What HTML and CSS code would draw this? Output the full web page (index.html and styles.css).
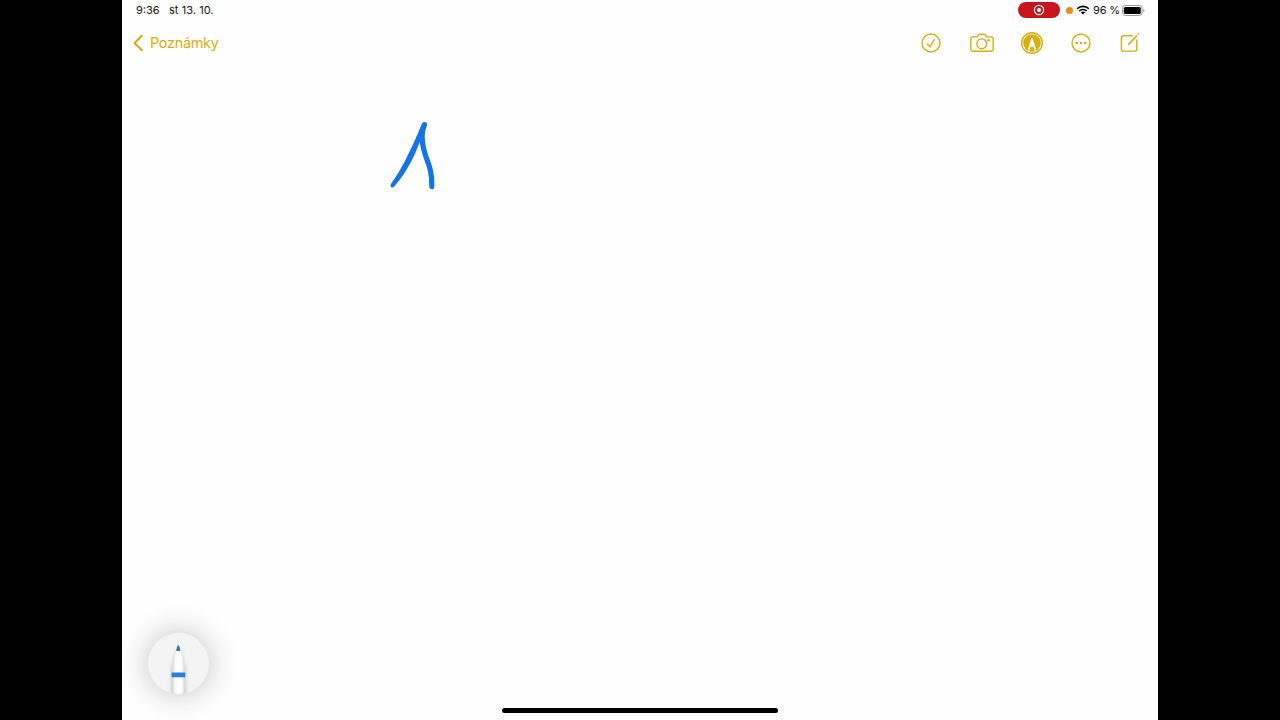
FILE: index.html
```
<!DOCTYPE html>
<html lang="cs">
<head>
    <meta charset="UTF-8">
    <title>Poznámky</title>
    <link rel="stylesheet" href="styles.css">
</head>
<body>
    <div class="screen">
        <header class="status">
            <span class="time">9:36</span>
            <span class="date">st 13. 10.</span>
            <span class="record">
                <svg width="12" height="12" viewBox="0 0 12 12">
                    <circle cx="6" cy="6" r="4.6" fill="none" stroke="#fff" stroke-width="1.3"/>
                    <circle cx="6" cy="6" r="2.1" fill="#fff"/>
                </svg>
            </span>
            <span class="dot"></span>
            <svg class="wifi" width="14" height="10" viewBox="0 0 14 10">
                <g fill="none" stroke="#000" stroke-width="1.6">
                    <path d="M1.2 3.8a8.2 8.2 0 0 1 11.6 0"/>
                    <path d="M3.2 6a5.4 5.4 0 0 1 7.6 0"/>
                </g>
                <path d="M7 9.6L4.9 7.5a3 3 0 0 1 4.2 0z"/>
            </svg>
            <span class="percent">96 %</span>
            <svg class="battery" width="23" height="11" viewBox="0 0 23 11">
                <rect x=".5" y=".5" width="19.6" height="10" rx="2.8" fill="none" stroke="#999"/>
                <rect x="1.8" y="1.9" width="17" height="7.2" rx="1.5"/>
                <path d="M21.2 3.7q1.3.5 1.3 1.8t-1.3 1.8z" fill="#999"/>
            </svg>
        </header>

        <nav class="toolbar">
            <a class="back">
                <svg width="12" height="18" viewBox="0 0 12 18">
                    <path d="M9.8 1.8L2.6 9l7.2 7.2" fill="none" stroke="currentColor" stroke-width="2.1" stroke-linecap="round" stroke-linejoin="round"/>
                </svg>
                <span class="label">Poznámky</span>
            </a>
            <div class="actions">
                <svg width="20" height="20" viewBox="0 0 20 20">
                    <circle cx="10" cy="10" r="9"/>
                    <path d="M6.2 10.7l2.7 3.2 4.7-7.8"/>
                </svg>
                <svg class="camera" width="24" height="20" viewBox="0 0 24 20">
                    <path d="M3 3.9h4.1l1.4-2Q9 1.2 9.8 1.2h4.2q.8 0 1.3.7l1.3 2H21q2.2 0 2.2 2.2v10q0 2.2-2.2 2.2H3q-2.2 0-2.2-2.2v-10Q.8 3.9 3 3.9z"/>
                    <circle cx="11.7" cy="10.8" r="4.9"/>
                    <circle class="fill" cx="18.5" cy="7.3" r="1.2"/>
                </svg>
                <svg class="markup" width="22" height="22" viewBox="0 0 22 22">
                    <circle cx="11" cy="11" r="10.3"/>
                    <circle class="fill" cx="11" cy="11" r="8.8"/>
                    <path class="nib" d="M6.7 18.1l1.4-4.6 2.2-7h1.4l2.2 7 1.4 4.6-1.7.8-1.2-4.5H9.6l-1.2 4.5z"/>
                </svg>
                <svg class="more" width="20" height="20" viewBox="0 0 20 20">
                    <circle cx="10" cy="10" r="9"/>
                    <g class="fill">
                        <circle cx="5.8" cy="10" r="1.3"/>
                        <circle cx="10" cy="10" r="1.3"/>
                        <circle cx="14.2" cy="10" r="1.3"/>
                    </g>
                </svg>
                <svg class="compose" width="20" height="20" viewBox="0 0 20 20">
                    <path d="M12.8 2.7H3.6q-2.2 0-2.2 2.2v11q0 2.2 2.2 2.2h11q2.2 0 2.2-2.2V6.4"/>
                    <path d="M8.3 11.6L17 2.7" stroke-width="1.7"/>
                    <path d="M18.2 1.4l.2-.2" stroke-width="1.7" stroke-linecap="round"/>
                </svg>
            </div>
        </nav>

        <main class="note">
            <svg width="60" height="80" viewBox="0 0 60 80">
                <path d="M37.1 8.7C33 17.5 30.5 24.5 25.6 34.5C19 48 14.5 57 6.2 68.4C4.4 71 7 74.2 9.3 71.6C19 60 24.5 50.5 29.8 39C34.5 28.5 37 20.5 41.7 10.6z" fill="#1273ea"/>
                <path d="M39.4 9.6C36.4 17 36.2 24.5 38.8 34.5C41.8 47.5 47.2 52 46.8 71.4" fill="none" stroke="#1273ea" stroke-width="5.2" stroke-linecap="round"/>
            </svg>
        </main>

        <div class="tool">
            <svg width="61" height="61" viewBox="0 0 61 61">
                <defs>
                    <clipPath id="disc"><circle cx="30.5" cy="30.5" r="30.5"/></clipPath>
                    <linearGradient id="barrel">
                        <stop offset="0" stop-color="#d2d2d4"/>
                        <stop offset=".3" stop-color="#fbfbfc"/>
                        <stop offset=".7" stop-color="#fff"/>
                        <stop offset="1" stop-color="#d4d4d6"/>
                    </linearGradient>
                    <filter id="soft" x="-50%" y="-20%" width="200%" height="140%">
                        <feGaussianBlur stdDeviation="2.2"/>
                    </filter>
                </defs>
                <g clip-path="url(#disc)">
                    <path d="M28.5 18h4l5 18v28h-14V36z" fill="#000" opacity=".17" filter="url(#soft)"/>
                    <path d="M28.4 17h3.8Q36.4 30 37.2 39v24H23.6V39Q24.4 30 28.4 17z" fill="url(#barrel)"/>
                    <path d="M28.2 18l.6-3.2 1-2.4q.5-1 1 0l1 2.4.6 3.2z" fill="#2a77cc"/>
                    <path d="M23.6 39.6h13.6v4.6H23.6z" fill="#2a7bdc"/>
                </g>
            </svg>
        </div>
        <div class="home"></div>
    </div>
</body>
</html>
```
FILE: styles.css
```
* {
    margin: 0;
    padding: 0;
    box-sizing: border-box;
}
body {
    height: 720px;
    background: #000;
    font-family: Inter, "Liberation Sans", sans-serif;
    overflow: hidden;
}
svg {
    display: block;
    flex: none;
}
.screen {
    position: relative;
    width: 1036px;
    height: 720px;
    margin: 0 auto;
    background: #fefefe;
    display: flex;
    flex-direction: column;
    overflow: hidden;
}

/* status bar */
.status {
    height: 20px;
    padding: 0 13px 0 14px;
    display: flex;
    align-items: center;
    font-size: 11px;
    color: #111;
    white-space: nowrap;
}
.time {
    width: 33px;
}
.date {
    letter-spacing: .05px;
}
.record {
    width: 42px;
    height: 16px;
    margin-left: auto;
    border-radius: 8px;
    background: #c9141e;
    display: flex;
    align-items: center;
    justify-content: center;
}
.dot {
    width: 7px;
    height: 7px;
    margin-left: 6px;
    border-radius: 50%;
    background: #e88c10;
}
.wifi {
    margin-left: 3px;
}
.percent {
    width: 27px;
    margin-left: 3px;
    letter-spacing: -.15px;
}
.battery {
    margin-left: 2px;
}

/* toolbar */
.toolbar {
    height: 46px;
    padding: 0 18px 0 10px;
    display: flex;
    align-items: center;
    justify-content: space-between;
    color: #d9ae10;
}
.back {
    display: flex;
    align-items: center;
    gap: 6px;
    font-size: 14.5px;
}
.label {
    padding-bottom: 1px;
    letter-spacing: -.33px;
}
.actions {
    display: flex;
    align-items: center;
}
.actions svg {
    fill: none;
    stroke: currentColor;
    stroke-width: 1.4;
}
.actions .fill {
    fill: currentColor;
    stroke: none;
}
.actions .nib {
    fill: #fff;
    stroke: none;
}
.camera {
    margin-left: 28.5px;
}
.markup {
    margin-left: 27.5px;
}
.more {
    margin-left: 27.5px;
}
.compose {
    margin-left: 29.5px;
}

/* drawing */
.note {
    flex: 1;
    padding: 49px 0 0 263px;
}

/* collapsed pen palette */
.tool {
    position: absolute;
    left: 26px;
    bottom: 26px;
    width: 61px;
    height: 61px;
    border-radius: 50%;
    background: #f5f4f5;
    box-shadow: 0 0 26px 4px rgba(40, 30, 40, .2);
}
.home {
    position: absolute;
    left: 380px;
    bottom: 7px;
    width: 276px;
    height: 5px;
    border-radius: 3px;
    background: #000;
}
```
